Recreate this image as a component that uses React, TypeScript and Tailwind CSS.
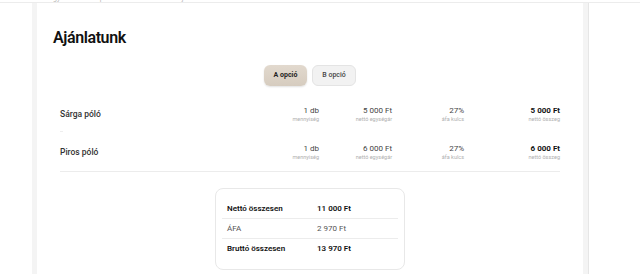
import React from 'react'

const items = [
  { name: 'Sárga póló', qty: '1 db', unit: '5 000 Ft', vat: '27%', total: '5 000 Ft' },
  { name: 'Piros póló', qty: '1 db', unit: '6 000 Ft', vat: '27%', total: '6 000 Ft' },
]

function Cell({ value, label, strong }: { value: string; label: string; strong?: boolean }) {
  return (
    <div className="flex flex-col items-end">
      <span className={`text-[8px] leading-[10px] ${strong ? 'font-bold text-[#111]' : 'text-[#444]'}`}>
        {value}
      </span>
      <span className="text-[5.5px] leading-[7px] text-[#b0b0b0]">{label}</span>
    </div>
  )
}

export default function App() {
  return (
    <div className="w-[640px] h-[274px] overflow-hidden bg-white font-['Roboto',sans-serif]">
      {/* cut-off intro text */}
      <div className="h-[3px] overflow-hidden border-b border-[#ececec] pl-[53px]">
        <p className="-mt-[5px] text-[7px] leading-[7px] text-[#b5b5b5]">
          gyártásával és precíz kivitelezéssel készítjük el.
        </p>
      </div>

      <div className="flex h-[271px]">
        <div className="w-[32px]" />
        <div className="w-[557px] bg-[#f4f4f4] px-[5px] border-r border-[#e6e6e6]">
          <div className="h-full bg-white px-[16px] pt-[25px]">
            <h2 className="text-[16px] leading-[20px] font-semibold tracking-tight text-[#111]">Ajánlatunk</h2>

            <div className="mt-[17px] flex justify-center gap-[5px]">
              <button className="h-[21px] w-[43px] rounded-[6px] bg-gradient-to-b from-[#e2d9ce] to-[#d6ccbf] text-[7px] font-bold text-[#222] shadow-[0_1px_2px_rgba(0,0,0,0.12)]">
                A opció
              </button>
              <button className="h-[21px] w-[44px] rounded-[6px] border border-[#e4e4e4] bg-[#f2f2f2] text-[7px] font-medium text-[#444]">
                B opció
              </button>
            </div>

            <div className="mt-[9px] px-[7px]">
              {items.map((it, i) => (
                <div
                  key={it.name}
                  className="relative grid h-[38px] grid-cols-[1fr_80px_73px_72px_96px] items-center"
                >
                  <span className="text-[8.5px] font-medium text-[#333]">{it.name}</span>
                  <Cell value={it.qty} label="mennyiség" />
                  <Cell value={it.unit} label="nettó egységár" />
                  <Cell value={it.vat} label="áfa kulcs" />
                  <Cell value={it.total} label="nettó összeg" strong />
                  {i === 0 && <div className="absolute left-0 bottom-[1px] h-px w-[3px] bg-[#eeeeee]" />}
                </div>
              ))}
              <div className="h-px bg-[#ececec]" />
            </div>

            <div className="mx-auto mt-[16px] w-[190px] rounded-[8px] border border-[#e8e8e8] px-[6px] py-[10px]">
              <div className="flex h-[20px] items-center border-b border-[#ececec] px-[5px] text-[8px] font-semibold text-[#111]">
                <span className="w-[90px]">Nettó összesen</span>
                <span>11 000 Ft</span>
              </div>
              <div className="flex h-[20px] items-center border-b border-[#ececec] px-[5px] text-[8px] text-[#555]">
                <span className="w-[90px]">ÁFA</span>
                <span>2 970 Ft</span>
              </div>
              <div className="flex h-[20px] items-center px-[5px] text-[8px] font-semibold text-[#111]">
                <span className="w-[90px]">Bruttó összesen</span>
                <span>13 970 Ft</span>
              </div>
            </div>
          </div>
        </div>
      </div>
    </div>
  )
}
